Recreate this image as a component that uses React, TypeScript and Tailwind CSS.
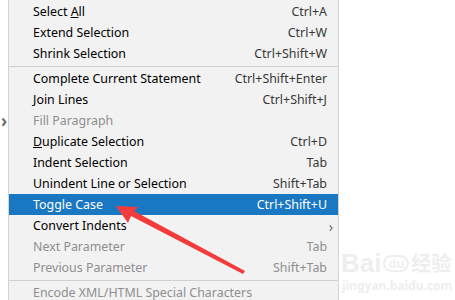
const items: { label: React.ReactNode; key?: string; disabled?: boolean; active?: boolean; sub?: boolean; sep?: boolean }[] = [
  { label: <>Select <u>A</u>ll</>, key: "Ctrl+A" },
  { label: "Extend Selection", key: "Ctrl+W" },
  { label: "Shrink Selection", key: "Ctrl+Shift+W", sep: true },
  { label: "Complete Current Statement", key: "Ctrl+Shift+Enter" },
  { label: "Join Lines", key: "Ctrl+Shift+J" },
  { label: "Fill Paragraph", disabled: true },
  { label: <><u>D</u>uplicate Selection</>, key: "Ctrl+D" },
  { label: "Indent Selection", key: "Tab" },
  { label: "Unindent Line or Selection", key: "Shift+Tab" },
  { label: "Toggle Case", key: "Ctrl+Shift+U", active: true },
  { label: "Convert Indents", sub: true },
  { label: "Next Parameter", key: "Tab", disabled: true },
  { label: "Previous Parameter", key: "Shift+Tab", disabled: true, sep: true },
  { label: "Encode XML/HTML Special Characters", disabled: true },
]

export default function App() {
  return (
    <div className="relative w-[455px] h-[300px] overflow-hidden bg-white flex" style={{ fontFamily: "'Noto Sans', 'Liberation Sans', sans-serif" }}>
      <div className="w-[8px] relative">
        <span className="absolute left-[1px] top-[108px] text-[17px] text-[#6e6e6e] font-bold">›</span>
      </div>
      <div className="w-[331px] bg-[#f2f2f2] border-l border-r border-[#d4d4d4] pt-[1px] text-[12.4px]">
        {items.map((it, i) => (
          <div key={i}>
            <div
              className={
                "h-[21px] flex items-center justify-between pt-[1px] pl-[24px] pr-[11px] " +
                (it.active ? "bg-[#1a78c2] text-white" : it.disabled ? "text-[#8f8f8f]" : "text-black")
              }
            >
              <span>{it.label}</span>
              {it.key && (
                <span className={it.active ? "text-white" : it.disabled ? "text-[#8f8f8f]" : "text-[#383838]"}>{it.key}</span>
              )}
              {it.sub && <span className="text-[#6a6a6a] text-[14px] -mr-[6px]">›</span>}
            </div>
            {it.sep && <div className="h-[4px] flex items-center"><div className="h-px w-full bg-[#d0d0d0]" /></div>}
          </div>
        ))}
      </div>
      <div className="flex-1 relative">
        <div className="absolute left-[2px] top-[250px] text-[#eeeeee] leading-none">
          <div className="flex items-center gap-[2px] text-[26px] font-bold" style={{ fontFamily: "'Liberation Sans', 'Noto Sans CJK SC', sans-serif" }}>
            <span>Bai</span>
            <span className="text-[13px] border-2 border-[#eeeeee] rounded-full px-[3px]">du</span>
            <span className="text-[20px]" style={{ fontFamily: "'Noto Sans CJK SC', sans-serif" }}>经验</span>
          </div>
          <div className="text-[12px] mt-[4px] ml-[1px] font-bold">jingyan.baidu.com</div>
        </div>
      </div>
      <svg className="absolute left-0 top-0" width="455" height="300">
        <polygon points="116,206 138,207 134,211 245,271 243,274 131,216 128,223" fill="#f23c3c" />
      </svg>
    </div>
  )
}
